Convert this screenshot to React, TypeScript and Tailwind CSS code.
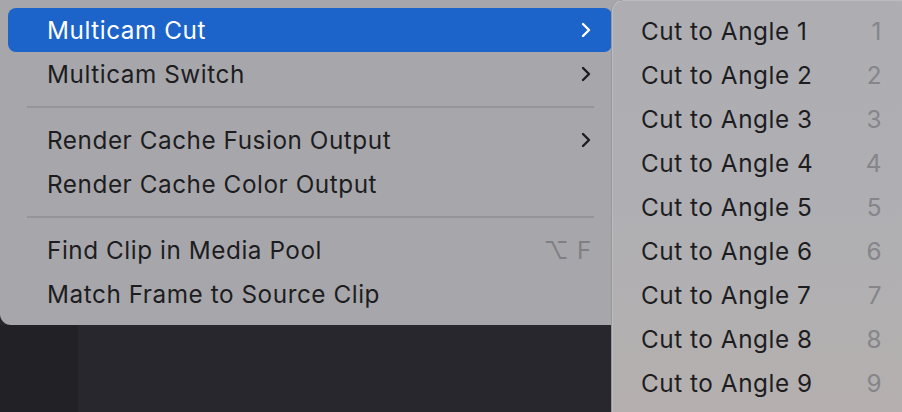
import React from 'react';

type Item = { label: string; submenu?: boolean; shortcut?: string; active?: boolean };

const GROUPS: Item[][] = [
  [
    { label: 'Multicam Cut', submenu: true, active: true },
    { label: 'Multicam Switch', submenu: true },
  ],
  [
    { label: 'Render Cache Fusion Output', submenu: true },
    { label: 'Render Cache Color Output' },
  ],
  [
    { label: 'Find Clip in Media Pool', shortcut: '⌥ F' },
    { label: 'Match Frame to Source Clip' },
  ],
];

const ANGLES = [1, 2, 3, 4, 5, 6, 7, 8, 9];

function Chevron({ active }: { active?: boolean }) {
  return (
    <svg width="12" height="16" viewBox="0 0 12 16" className="shrink-0">
      <polyline
        points="3,2 9,8 3,14"
        fill="none"
        stroke={active ? '#ffffff' : '#1d1d1f'}
        strokeWidth="2.4"
        strokeLinecap="round"
        strokeLinejoin="round"
      />
    </svg>
  );
}

function MenuRow({ item }: { item: Item }) {
  return (
    <div
      className={`mx-2 flex h-[44px] items-center justify-between rounded-[8px] pl-[39px] pr-[20px] ${
        item.active ? 'bg-[#1c64c9] text-white' : 'text-[#1d1d1f]'
      }`}
    >
      <span className="pt-[1px]">{item.label}</span>
      {item.submenu && <Chevron active={item.active} />}
      {item.shortcut && (
        <span className="pt-[1px] text-[#7f7f84]">
          ⌥<span className="ml-[8px]">F</span>
        </span>
      )}
    </div>
  );
}

export default function App() {
  return (
    <div
      className="relative flex h-[412px] w-[902px] items-start overflow-hidden bg-[#28272d] text-[24.3px] leading-none tracking-[0.55px]"
      style={{ fontFamily: 'Inter, "Noto Sans", sans-serif' }}
    >
      {/* main context menu */}
      <div className="relative z-0 flex h-[325px] w-[620px] shrink-0 flex-col rounded-bl-[11px] bg-[#a7a7ab] pt-2">
        {GROUPS.map((g, gi) => (
          <div key={gi} className="flex flex-col">
            {gi > 0 && (
              <div className="flex h-[22px] items-center pl-[27px] pr-[26px]">
                <div className="h-[2px] w-full bg-[#959599]" />
              </div>
            )}
            {g.map((it) => (
              <MenuRow key={it.label} item={it} />
            ))}
          </div>
        ))}
      </div>

      {/* submenu */}
      <div className="relative z-10 -ml-[8px] flex h-[412px] w-[290px] shrink-0 flex-col rounded-tl-[11px] border-l border-t border-[#bcbcc0] bg-gradient-to-b from-[#aeaeb2] via-[#afafb3] to-[#b5b0af] pt-[8px] text-[#1d1d1f] shadow-[-1px_0_0_#98989c]">
        {ANGLES.map((n) => (
          <div key={n} className="flex h-[44px] items-center justify-between pl-[28px] pr-[20px] pt-[1px]">
            <span>Cut to Angle {n}</span>
            <span className="text-[#85858a]">{n}</span>
          </div>
        ))}
      </div>

      {/* darker strip under the menu, left */}
      <div className="absolute bottom-0 left-0 h-[87px] w-[78px] bg-[#222126]" />
    </div>
  );
}
